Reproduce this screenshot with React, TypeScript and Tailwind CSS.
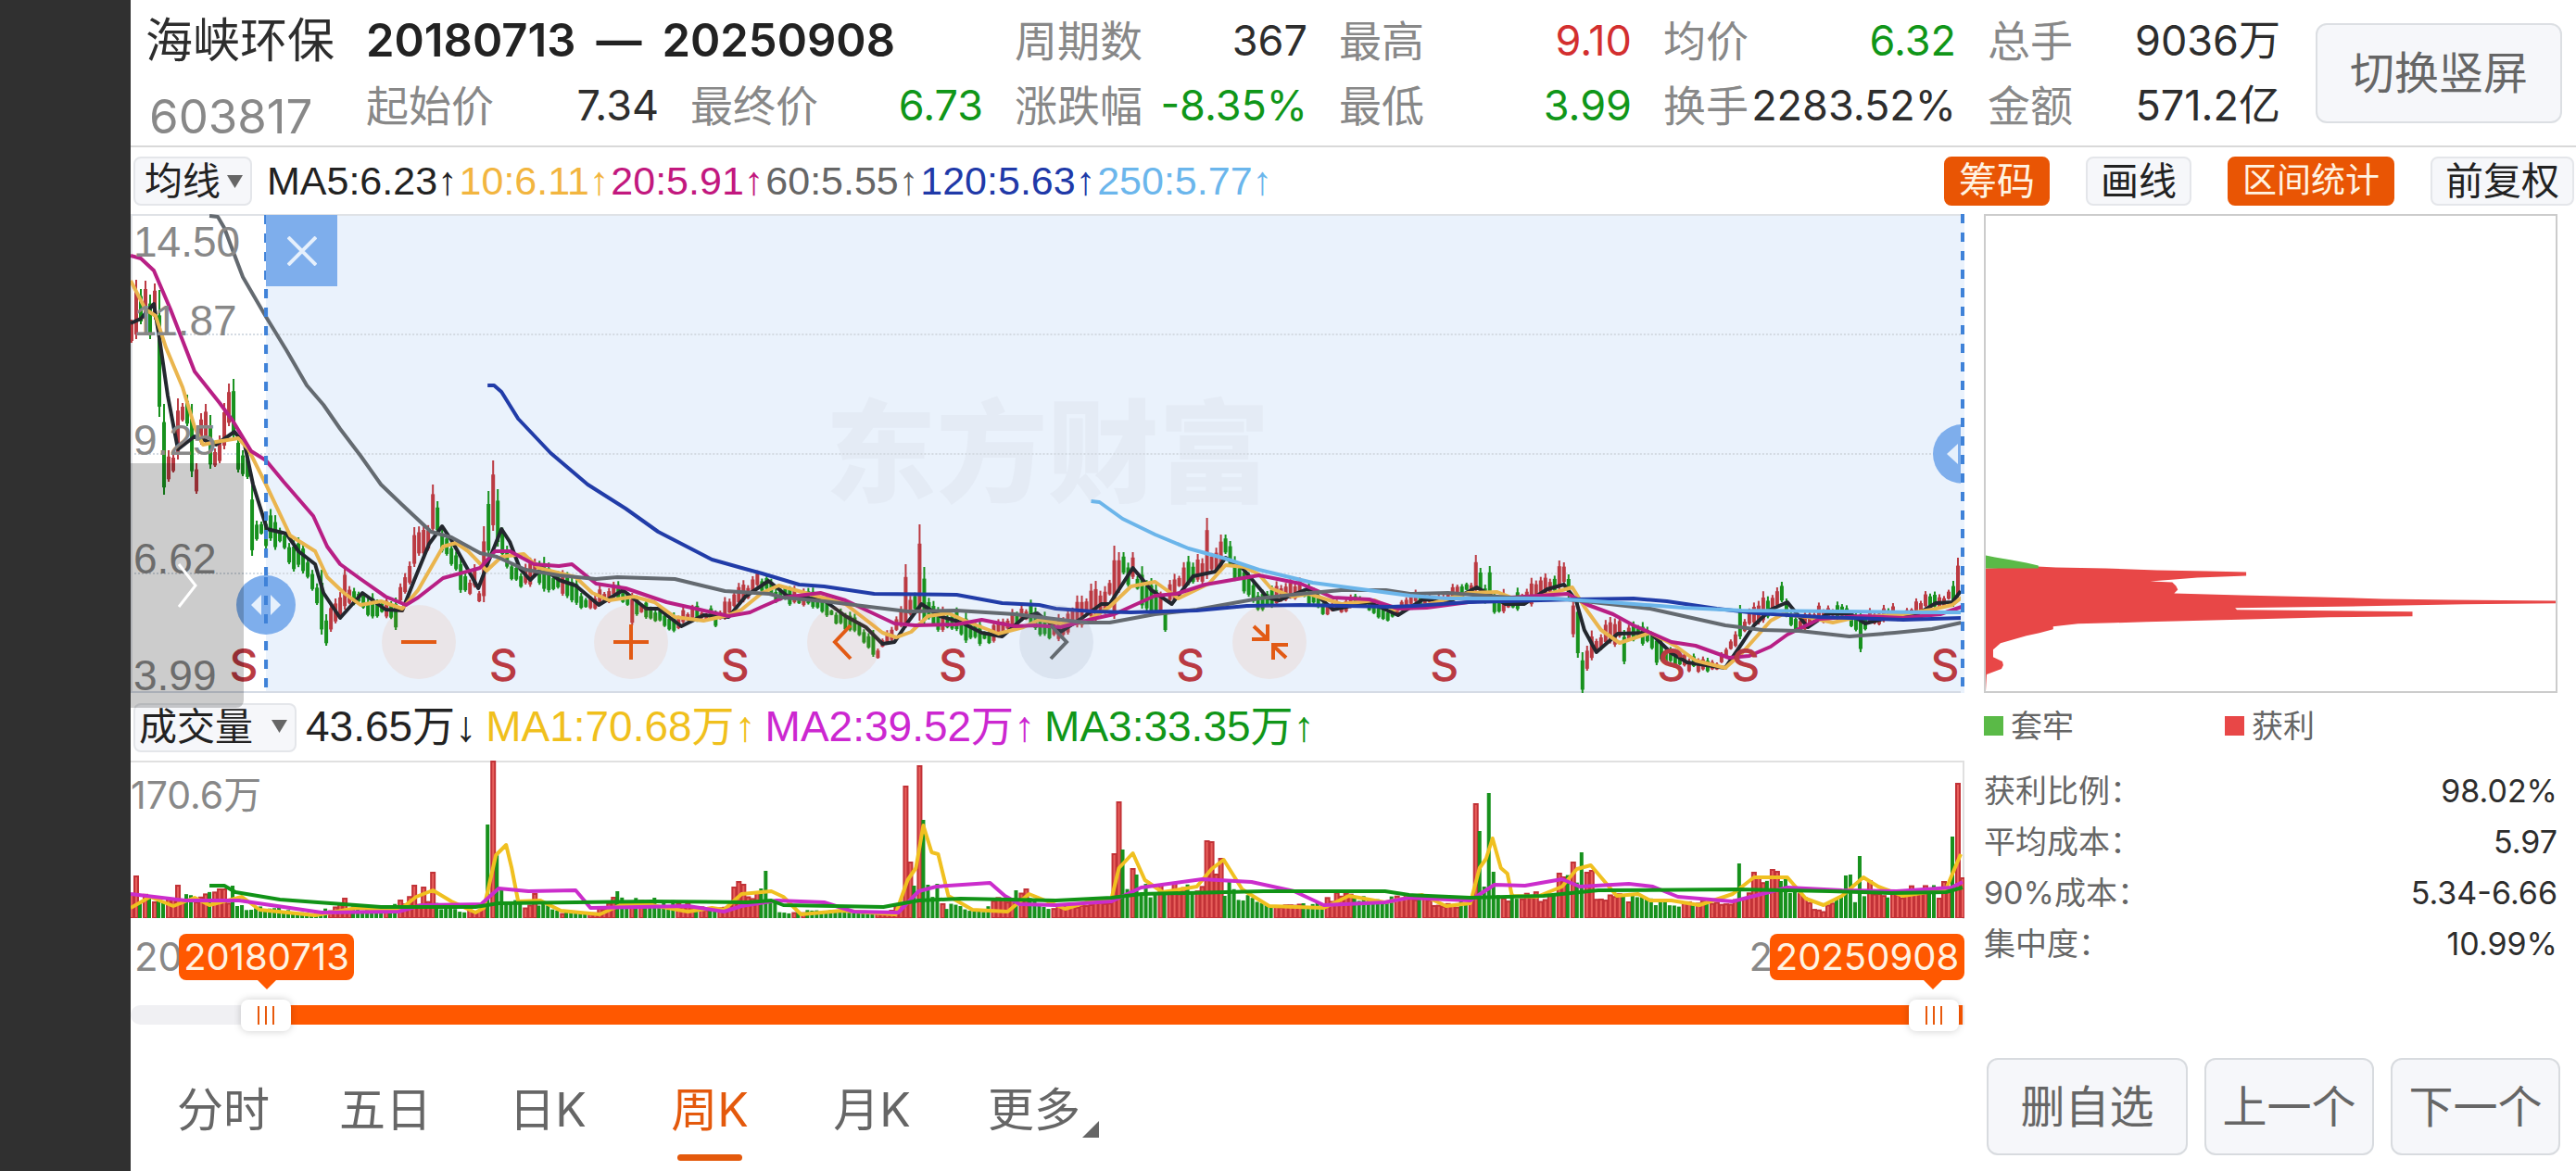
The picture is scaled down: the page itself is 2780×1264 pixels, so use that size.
import { useState } from 'react';
import clsx from 'clsx';

type Point = [number, number];

const STATS = [
  { label: '周期数', value: '367', color: 'text-[#2d2d2d]' },
  { label: '最高', value: '9.10', color: 'text-[#d32f2f]' },
  { label: '均价', value: '6.32', color: 'text-[#109618]' },
  { label: '总手', value: '9036万', color: 'text-[#2d2d2d]' },
  { label: '起始价', value: '7.34', color: 'text-[#2d2d2d]' },
  { label: '最终价', value: '6.73', color: 'text-[#109618]' },
  { label: '涨跌幅', value: '-8.35%', color: 'text-[#109618]' },
  { label: '最低', value: '3.99', color: 'text-[#109618]' },
  { label: '换手', value: '2283.52%', color: 'text-[#2d2d2d]' },
  { label: '金额', value: '571.2亿', color: 'text-[#2d2d2d]' },
];

const PRICE_AVERAGES = [
  { text: 'MA5:6.23↑', color: 'text-[#222]' },
  { text: '10:6.11↑', color: 'text-[#f2b53f]' },
  { text: '20:5.91↑', color: 'text-[#c2187e]' },
  { text: '60:5.55↑', color: 'text-[#666]' },
  { text: '120:5.63↑', color: 'text-[#2039a8]' },
  { text: '250:5.77↑', color: 'text-[#6bb6ec]' },
];

const VOLUME_AVERAGES = [
  { text: '43.65万↓', color: 'text-[#222]' },
  { text: 'MA1:70.68万↑', color: 'text-[#f0c01c]' },
  { text: 'MA2:39.52万↑', color: 'text-[#cc27d0]' },
  { text: 'MA3:33.35万↑', color: 'text-[#109618]' },
];

const TOOLS = [
  { label: '筹码', active: true },
  { label: '画线', active: false },
  { label: '区间统计', active: true },
  { label: '前复权', active: false },
];

const COSTS = [
  { label: '获利比例：', value: '98.02%' },
  { label: '平均成本：', value: '5.97' },
  { label: '90%成本：', value: '5.34-6.66' },
  { label: '集中度：', value: '10.99%' },
];

const TABS = ['分时', '五日', '日K', '周K', '月K'];

// chart coordinates share one canvas: x 141..2119, price y 232..748, volume y 821..992
const MA5: Point[] = [[141,349],[152,344],[166,328],[172,365],[181,427],[192,485],[210,471],[233,480],[253,466],[264,480],[273,523],[288,571],[309,576],[322,595],[340,609],[349,640],[367,667],[391,640],[416,658],[434,659],[447,626],[463,587],[477,568],[487,583],[516,635],[527,606],[541,571],[550,585],[561,614],[572,626],[585,613],[603,626],[621,632],[646,653],[672,637],[697,657],[710,657],[735,676],[759,664],[786,666],[804,644],[829,627],[849,643],[889,648],[912,665],[934,677],[952,695],[965,693],[979,672],[994,652],[1014,665],[1037,672],[1059,683],[1081,687],[1104,667],[1119,662],[1144,682],[1166,668],[1188,652],[1197,652],[1222,613],[1242,637],[1264,652],[1287,622],[1311,617],[1322,602],[1340,613],[1367,645],[1380,648],[1412,635],[1438,658],[1477,650],[1508,664],[1535,647],[1566,648],[1593,634],[1624,652],[1644,652],[1669,636],[1687,631],[1700,648],[1709,680],[1722,704],[1745,684],[1780,683],[1803,705],[1820,715],[1861,721],[1874,702],[1892,675],[1910,658],[1928,650],[1950,677],[1972,662],[1995,662],[2012,673],[2044,665],[2070,662],[2088,651],[2106,650],[2115,638]];
const MA10: Point[] = [[141,303],[157,334],[168,341],[179,375],[197,418],[210,461],[219,480],[233,477],[257,473],[268,485],[287,523],[313,578],[340,595],[353,623],[371,640],[389,653],[411,649],[434,657],[451,637],[478,590],[492,586],[505,595],[525,616],[541,601],[565,598],[581,613],[621,623],[639,640],[657,648],[684,644],[706,650],[728,666],[759,670],[786,664],[800,658],[822,640],[840,632],[858,637],[912,652],[938,672],[952,683],[967,688],[983,682],[1001,665],[1023,662],[1046,672],[1077,684],[1104,677],[1121,669],[1144,673],[1170,672],[1197,655],[1220,633],[1246,628],[1271,646],[1304,630],[1322,610],[1342,612],[1358,620],[1371,635],[1394,644],[1412,641],[1447,652],[1483,648],[1504,658],[1539,653],[1584,640],[1615,639],[1633,646],[1664,643],[1696,634],[1709,655],[1727,680],[1747,694],[1780,683],[1807,697],[1829,713],[1861,721],[1879,705],[1910,670],[1923,663],[1950,666],[1977,672],[1999,667],[2053,663],[2084,658],[2106,653],[2116,645]];
const MA20: Point[] = [[141,276],[152,279],[166,292],[184,334],[210,401],[237,435],[251,454],[271,487],[287,497],[306,520],[338,557],[353,590],[367,609],[389,625],[416,644],[438,653],[451,645],[478,624],[518,613],[534,595],[550,595],[576,609],[603,611],[617,609],[643,630],[675,635],[719,650],[755,658],[786,665],[809,661],[822,655],[845,645],[885,640],[912,648],[965,673],[987,675],[1032,674],[1059,669],[1095,676],[1117,675],[1144,677],[1179,668],[1202,663],[1246,643],[1269,641],[1300,631],[1358,621],[1403,630],[1438,645],[1477,647],[1508,657],[1539,656],[1584,650],[1629,645],[1691,641],[1713,653],[1740,663],[1762,675],[1803,693],[1829,697],[1865,710],[1887,708],[1910,698],[1928,685],[1963,668],[2008,665],[2053,667],[2093,663],[2116,655]];
const MA60: Point[] = [[226,233],[235,234],[242,246],[251,270],[262,299],[287,342],[309,378],[331,416],[349,437],[367,463],[389,492],[411,523],[434,545],[465,574],[487,580],[518,597],[536,601],[567,615],[603,621],[643,625],[666,623],[728,625],[782,638],[830,641],[845,645],[889,649],[979,660],[1032,659],[1095,663],[1170,672],[1197,672],[1246,663],[1291,658],[1358,646],[1403,641],[1447,637],[1495,637],[1521,641],[1562,640],[1629,645],[1691,647],[1736,652],[1780,657],[1816,665],[1861,675],[1901,680],[1941,681],[1995,687],[2044,683],[2084,679],[2116,672]];
const MA120: Point[] = [[526,416],[533,416],[541,423],[559,452],[594,489],[634,523],[675,549],[710,574],[768,604],[800,613],[822,619],[862,631],[889,633],[943,641],[1032,642],[1081,651],[1121,653],[1139,657],[1179,660],[1220,661],[1291,659],[1345,654],[1403,653],[1500,655],[1526,654],[1584,650],[1700,647],[1762,646],[1798,649],[1852,657],[1896,662],[1963,666],[2053,669],[2116,667]];
const MA250: Point[] = [[1177,541],[1186,542],[1211,560],[1246,577],[1282,592],[1322,603],[1358,615],[1416,629],[1461,635],[1521,643],[1562,646],[1673,646],[1736,650],[1816,656],[1879,659],[1986,660],[2075,661],[2116,661]];

const VOL_MA1: Point[] = [[141,980],[162,968],[187,978],[210,969],[226,977],[261,968],[280,982],[340,988],[385,980],[430,983],[449,968],[467,961],[487,973],[513,985],[522,980],[535,923],[546,912],[552,937],[559,973],[583,972],[605,983],[647,987],[669,977],[698,976],[742,984],[768,980],[781,982],[800,965],[832,962],[845,968],[864,987],[908,983],[966,987],[979,950],[988,937],[996,891],[1005,920],[1012,922],[1023,967],[1049,982],[1087,984],[1110,965],[1130,973],[1149,981],[1172,974],[1199,970],[1207,937],[1222,921],[1235,950],[1254,963],[1291,957],[1307,938],[1320,928],[1340,960],[1369,978],[1428,980],[1455,967],[1494,974],[1534,966],[1560,978],[1586,975],[1596,937],[1603,927],[1610,905],[1619,937],[1626,943],[1631,967],[1658,968],[1685,957],[1701,938],[1716,934],[1744,967],[1767,965],[1780,972],[1803,972],[1833,977],[1869,965],[1892,947],[1928,947],[1948,970],[1967,977],[1987,967],[2010,947],[2026,957],[2053,967],[2099,960],[2115,922]];
const VOL_MA2: Point[] = [[141,965],[200,972],[258,972],[347,985],[430,984],[455,977],[519,976],[538,959],[570,962],[621,961],[637,980],[742,978],[781,984],[800,978],[838,972],[889,974],[921,984],[969,985],[991,962],[1010,957],[1068,953],[1084,967],[1100,976],[1139,977],[1199,973],[1231,958],[1297,949],[1350,952],[1396,962],[1428,977],[1494,974],[1520,969],[1586,972],[1612,955],[1645,956],[1685,949],[1704,957],[1757,954],[1783,957],[1810,968],[1869,973],[1928,958],[1987,961],[2046,962],[2105,958],[2117,952]];
const VOL_MA3: Point[] = [[226,956],[242,956],[254,963],[302,971],[411,979],[513,979],[538,975],[704,973],[806,974],[832,972],[845,977],[953,979],[991,972],[1036,970],[1139,972],[1199,969],[1231,965],[1363,962],[1494,962],[1520,966],[1586,969],[1665,967],[1724,961],[1875,960],[1974,962],[2040,964],[2099,963],[2117,958]];

// half height of an ordinary candle, and height of an ordinary volume bar
const SWING: Point[] = [[141,34],[290,22],[420,14],[470,26],[560,22],[640,13],[800,13],[940,12],[1000,18],[1100,14],[1220,26],[1300,20],[1380,16],[1450,9],[1580,12],[1690,18],[1760,16],[1860,8],[1900,20],[1960,12],[2119,12]];
const VOLUME: Point[] = [[141,25],[175,24],[205,22],[240,28],[262,12],[300,10],[340,5],[370,14],[410,7],[440,22],[470,15],[500,6],[520,12],[545,20],[560,16],[590,14],[600,8],[640,6],[670,20],[730,16],[780,10],[800,30],[830,22],[845,5],[880,9],[920,6],[960,6],[975,25],[1000,25],[1020,14],[1060,8],[1085,25],[1110,28],[1130,10],[1150,15],[1190,18],[1225,30],[1290,35],[1310,28],[1340,26],[1360,14],[1420,14],[1445,25],[1480,20],[1520,25],[1560,14],[1590,20],[1625,22],[1660,25],[1690,40],[1720,26],[1780,22],[1800,15],[1870,18],[1900,35],[1930,40],[1950,18],[1962,8],[1990,22],[2020,25],[2060,30],[2117,32]];

// x: [high, low, rising]
const BIG_CANDLES: Record<number, [number, number, boolean]> = {
  142:[345,370,true],147:[302,366,true],152:[312,350,false],157:[303,348,true],162:[318,366,false],167:[306,345,true],
  172:[313,450,false],177:[436,534,false],182:[486,520,true],187:[490,510,true],192:[430,496,true],197:[435,455,true],202:[426,460,false],207:[436,515,false],212:[500,533,true],
  217:[446,480,true],222:[436,478,true],227:[448,506,false],232:[484,504,true],237:[470,500,true],242:[435,485,true],247:[414,460,true],252:[409,475,false],257:[470,510,false],262:[486,514,false],267:[490,517,false],272:[524,600,false],
  347:[615,685,false],352:[663,697,false],357:[650,682,true],372:[611,658,true],427:[645,680,false],447:[569,612,true],457:[565,600,true],467:[523,575,true],472:[541,575,false],
  517:[638,650,true],522:[568,650,true],527:[530,600,false],532:[497,573,true],537:[528,590,false],682:[640,675,true],
  942:[680,709,false],947:[700,711,true],977:[609,678,true],992:[566,670,true],997:[612,675,false],
  1202:[589,668,true],1207:[596,640,true],1212:[596,620,false],1222:[596,625,true],1257:[658,682,false],1282:[600,632,false],
  1302:[559,625,true],1317:[577,615,true],1322:[577,598,false],1327:[584,612,false],
  1592:[599,638,true],1597:[613,638,false],1607:[611,645,false],1682:[605,636,true],1687:[607,630,true],1692:[620,645,false],
  1697:[645,688,true],1702:[648,710,false],1707:[704,748,false],1712:[697,724,true],1752:[680,717,false],1787:[685,718,false],
  1877:[653,690,false],1917:[634,655,true],1922:[628,650,false],2007:[660,704,false],2107:[627,655,false],2112:[602,645,true],2117:[613,628,true],
};
const BIG_VOLUMES: Record<number, number> = {
  147:46,192:36,242:32,252:35,372:22,447:36,457:34,467:50,527:101,532:170,537:70,542:30,577:27,662:23,667:29,707:22,792:34,797:40,802:37,822:32,827:51,
  977:143,982:61,987:35,992:165,997:106,1002:36,1012:37,1097:30,1107:32,1202:70,1207:126,1212:74,1222:54,1227:47,1302:84,1307:83,1312:48,1317:65,1327:42,
  1592:124,1597:94,1602:34,1607:135,1612:50,1682:49,1687:45,1697:61,1707:71,1712:50,1717:52,1877:59,1892:50,1897:45,1912:53,1917:51,1922:40,1992:46,1997:47,2007:67,2017:41,2097:40,2107:88,2112:146,2117:44,
};

const CHIP_PROFIT = '0,382 56,380 76,381 130,382 185,384 239,385 282,386 282,390 256,391 229,392 204,394 178,396 202,397 206,401 208,405 204,409 276,411 362,413 430,415 503,416 617,417 617,420 518,421 410,423 270,425 272,427 379,428 462,429 462,434 372,435 295,437 215,439 174,440 139,441 100,442 73,445 73,448 58,452 44,455 16,463 8,470 8,478 18,483 19,487 17,491 1,497 0,515';
const CHIP_TRAPPED = '0,368 10,370 28,373 44,376 57,379 57,382 0,382';

const SELL_MARKS = [263, 543, 793, 1028, 1284, 1558, 1803, 1883, 2098];

function valueAt(line: Point[], x: number) {
  const i = line.findIndex((p) => p[0] >= x);
  if (i < 0) return line[line.length - 1][1];
  if (i === 0) return line[0][1];
  const [x0, y0] = line[i - 1];
  const [x1, y1] = line[i];
  return y0 + ((y1 - y0) * (x - x0)) / (x1 - x0);
}

function noise(n: number) {
  const v = Math.sin(n * 12.9898) * 43758.5453;
  return v - Math.floor(v);
}

const CANDLES = Array.from({ length: 396 }, (_, i) => {
  const x = 142 + i * 5;
  const big = BIG_CANDLES[x];
  if (big) return { x, high: big[0], low: big[1], up: big[2] };
  const mid = valueAt(MA5, x + 10);
  const swing = valueAt(SWING, x);
  const slope = valueAt(MA5, x + 14) - valueAt(MA5, x + 4);
  return {
    x,
    high: mid - swing * (0.25 + noise(i) * 0.9),
    low: mid + swing * (0.2 + noise(i + 500) * 0.7),
    up: slope + (noise(i + 900) - 0.5) * 12 < 0,
  };
});

const BARS = CANDLES.map(({ x, up }, i) => ({
  x,
  up,
  height: BIG_VOLUMES[x] ?? Math.max(3, valueAt(VOLUME, x) * (0.7 + noise(i + 77) * 0.5)),
}));

function Line({ points, color }: { points: Point[]; color: string }) {
  return <polyline points={points.join(' ')} fill="none" stroke={color} strokeWidth="4" strokeLinejoin="round" />;
}

function Picker({ label, options, wide }: { label: string; options: string[]; wide?: boolean }) {
  return (
    <div className="relative shrink-0">
      <select
        aria-label={label}
        className={clsx(
          'h-[53px] appearance-none rounded-lg border-2 border-[#e4e6ea] bg-[#f6f7fa] text-[41px] leading-[48px] text-[#222]',
          wide ? 'w-[176px] pl-1' : 'w-[128px] pl-2.5'
        )}
      >
        {options.map((o) => (
          <option key={o}>{o}</option>
        ))}
      </select>
      <svg className="pointer-events-none absolute right-2.5 top-5 h-3.5 w-[17px]" viewBox="0 0 17 14">
        <path d="M0 0H17L8.500 14Z" fill="#666" />
      </svg>
    </div>
  );
}

function Header() {
  const cell = (s: (typeof STATS)[number]) => (
    <div key={s.label} className="flex items-center justify-between whitespace-nowrap">
      <span className="text-[46px] text-[#888]">{s.label}</span>
      <span className={s.color}>{s.value}</span>
    </div>
  );
  return (
    <header className="flex h-[159px] items-start border-b-2 border-[#d9d9d9]">
      <div className="w-[254px] shrink-0 pl-4 pt-2">
        <h1 className="text-[51px] leading-[72px] text-[#2d2d2d]">海峡环保</h1>
        <p className="pl-1 pt-2 text-[51px] leading-[76px] text-[#888]">603817</p>
      </div>
      <div className="grid flex-1 grid-cols-6 gap-x-[34px] pt-[9px] text-[45px] leading-[70px]">
        <div className="col-span-2 flex gap-[22px] whitespace-nowrap text-[49px] font-semibold text-[#222]">
          <span>20180713</span>
          <span>—</span>
          <span>20250908</span>
        </div>
        {STATS.map(cell)}
      </div>
      <button className="ml-[38px] mr-[15px] mt-[25px] h-[108px] w-[266px] shrink-0 rounded-xl border-2 border-[#dcdfe3] bg-[#f6f7fa] text-[48px] text-[#666]">
        切换竖屏
      </button>
    </header>
  );
}

function Toolbar() {
  return (
    <div className="flex h-[72px] items-center pl-[3px] pr-0.5">
      <Picker label="指标" options={['均线']} />
      <div className="flex flex-1 gap-0.5 whitespace-nowrap pl-4 font-['Liberation_Sans','Noto_Sans_CJK_SC',sans-serif] text-[43px] leading-[53px]">
        {PRICE_AVERAGES.map((a) => (
          <span key={a.text} className={a.color}>{a.text}</span>
        ))}
      </div>
      <div className="flex gap-[39px]">
        {TOOLS.map((t) => (
          <button
            key={t.label}
            className={clsx(
              'h-[53px] rounded-lg border-2 px-3.5 leading-[48px] whitespace-nowrap',
              t.label.length > 3 ? 'text-[37px]' : 'text-[41px]',
              t.active ? 'border-[#e95504] bg-[#e95504] text-[#fff3e2]' : 'border-[#e4e6ea] bg-[#f6f7fa] text-[#222]'
            )}
          >
            {t.label}
          </button>
        ))}
      </div>
    </div>
  );
}

const ROUND = 'absolute top-[422px] flex size-20 -translate-x-1/2 items-center justify-center rounded-full';

function PriceChart() {
  return (
    <div className="relative h-[517px] overflow-hidden">
      <div className="absolute inset-y-0 left-[146px] right-0 bg-[#eaf2fc]" />
      <div className="absolute inset-0 flex items-center justify-center text-[120px] font-black text-[#e4ebf5]">东方财富</div>
      <svg className="absolute inset-0 size-full" viewBox="141 231 1978 517" preserveAspectRatio="none">
        {[361, 490, 619].map((y) => (
          <line key={y} x1="141" x2="2119" y1={y} y2={y} stroke="#d3dae2" strokeWidth="2" strokeDasharray="2 2" />
        ))}
        <path d="M142 748V232H2118V748" fill="none" stroke="#dfe2e6" strokeWidth="2" />
        <line x1="141" x2="2119" y1="747" y2="747" stroke="#d5dbe5" strokeWidth="2" />
        {CANDLES.map((c) => {
          const color = c.up ? '#bb3a42' : '#17911d';
          const inset = (c.low - c.high) * 0.2;
          return (
            <g key={c.x} fill={color}>
              <rect x={c.x - 1} y={c.high} width="2" height={c.low - c.high} />
              <rect x={c.x - 2} y={c.high + inset} width="4" height={c.low - c.high - inset * 1.4} />
            </g>
          );
        })}
        <Line points={MA5} color="#23272e" />
        <Line points={MA10} color="#eab54e" />
        <Line points={MA20} color="#b81f85" />
        <Line points={MA60} color="#646a70" />
        <Line points={MA120} color="#213ca8" />
        <Line points={MA250} color="#6bb5ea" />
        <line x1="287" x2="287" y1="232" y2="748" stroke="#3f82d8" strokeWidth="4" strokeDasharray="10 10" />
      </svg>

      <div className="absolute left-[3px] top-0 font-['Liberation_Sans',sans-serif] text-[46px] leading-[36px] text-[#888]">
        <span className="absolute top-[12px]">14.50</span>
        <span className="absolute top-[97px]">11.87</span>
        <span className="absolute top-[226px]">9.25</span>
        <span className="absolute top-[354px]">6.62</span>
        <span className="absolute top-[480px]">3.99</span>
      </div>

      {SELL_MARKS.map((x) => (
        <span
          key={x}
          className="absolute top-[458px] -translate-x-1/2 text-[48px] font-medium leading-[58px] text-[#b93a42]"
          style={{ left: `${((x - 141) / 1978) * 100}%` }}
        >
          S
        </span>
      ))}

      <button aria-label="缩小" className={clsx(ROUND, 'left-[15.700%] bg-[#f0783c]/10')}>
        <svg className="size-10" viewBox="0 0 40 40" fill="none" stroke="#e25a14" strokeWidth="4"><path d="M1 20H39" /></svg>
      </button>
      <button aria-label="放大" className={clsx(ROUND, 'left-[27.300%] bg-[#f0783c]/10')}>
        <svg className="size-10" viewBox="0 0 40 40" fill="none" stroke="#e25a14" strokeWidth="4"><path d="M1 20H39M20 1V39" /></svg>
      </button>
      <button aria-label="左移" className={clsx(ROUND, 'left-[38.900%] bg-[#f0783c]/10')}>
        <svg className="size-10" viewBox="0 0 40 40" fill="none" stroke="#e25a14" strokeWidth="4"><path d="M27 2L10 20L27 38" /></svg>
      </button>
      <button aria-label="右移" className={clsx(ROUND, 'left-[50.500%] bg-[#8696ac]/15')}>
        <svg className="size-10" viewBox="0 0 40 40" fill="none" stroke="#646a70" strokeWidth="4"><path d="M14 2L31 20L14 38" /></svg>
      </button>
      <button aria-label="还原" className={clsx(ROUND, 'left-[62.100%] bg-[#f0783c]/10')}>
        <svg className="size-10" viewBox="0 0 40 40" fill="none" stroke="#e25a14" strokeWidth="4">
          <path d="M3 3L18 17M18 1V17H1M38 37L24 24M24 39V23H40" />
        </svg>
      </button>

      <button aria-label="关闭" className="absolute left-[146px] top-px flex size-[77px] items-center justify-center bg-[#7eaeec]">
        <svg className="size-8" viewBox="0 0 32 32" fill="none" stroke="#e6f0fc" strokeWidth="4"><path d="M1 1L31 31M31 1L1 31" /></svg>
      </button>
      <svg className="absolute left-[114px] top-[390px] size-16" viewBox="0 0 64 64">
        <circle cx="32" cy="32" r="32" fill="#7eaeec" />
        <path d="M27 21V43L16 32ZM37 21V43L48 32Z" fill="#e6f0fc" />
        <path d="M32 2V12M32 22V32M32 42V52" stroke="#3f82d8" strokeWidth="4" />
      </svg>
      <svg className="absolute -right-[30px] top-[227px] size-16" viewBox="0 0 64 64">
        <circle cx="32" cy="32" r="32" fill="#7eaeec" />
        <path d="M27 21V43L15 32Z" fill="#e6f0fc" />
      </svg>
      <div className="absolute inset-y-0 right-0 w-1 bg-[repeating-linear-gradient(180deg,#3f82d8_0_10px,#eaf2fc_10px_20px)]" />
    </div>
  );
}

function VolumeChart() {
  return (
    <div className="relative h-[171px]">
      <svg className="absolute inset-0 size-full" viewBox="141 821 1978 171" preserveAspectRatio="none">
        <path d="M141 822H2118V992" fill="none" stroke="#e0e0e0" strokeWidth="2" />
        {BARS.map((b) => (
          <g key={b.x}>
            <rect x={b.x - 3} y={991 - b.height} width={b.up ? 6 : 4} height={b.height} fill={b.up ? '#c23237' : '#17911d'} />
            {b.up && <rect x={b.x - 1} y={993 - b.height} width="2" height={b.height - 3} fill="#e8605c" />}
          </g>
        ))}
        <Line points={VOL_MA1} color="#f0c020" />
        <Line points={VOL_MA2} color="#cb2dcc" />
        <Line points={VOL_MA3} color="#119317" />
      </svg>
      <span className="absolute left-0 top-[11px] text-[41px] leading-[52px] text-[#888]">170.6万</span>
    </div>
  );
}

const RANGE_INPUT =
  'pointer-events-none absolute inset-0 h-[34px] w-full appearance-none bg-transparent [&::-webkit-slider-thumb]:pointer-events-auto [&::-webkit-slider-thumb]:h-[34px] [&::-webkit-slider-thumb]:w-[54px] [&::-webkit-slider-thumb]:appearance-none [&::-webkit-slider-thumb]:rounded-lg [&::-webkit-slider-thumb]:bg-white [&::-webkit-slider-thumb]:bg-[image:repeating-linear-gradient(90deg,#e8590c_0_2px,transparent_2px_8px)] [&::-webkit-slider-thumb]:bg-[length:18px_20px] [&::-webkit-slider-thumb]:bg-center [&::-webkit-slider-thumb]:bg-no-repeat [&::-webkit-slider-thumb]:shadow-[0_0_8px_rgba(0,0,0,0.2)]';

function RangeSlider() {
  const [start, setStart] = useState(62);
  const [end, setEnd] = useState(997);
  return (
    <div className="pt-4">
      <div className="relative h-[50px] text-[42px] leading-[50px] text-[#888]">
        <span className="pl-1">20</span>
        <span className="absolute right-[207px]">2</span>
        <div className="absolute left-[52px] top-0 w-[189px] rounded-lg bg-[#ff5800] text-center text-[40px] text-[#fff3e2]">
          20180713
          <span className="absolute left-1/2 top-full -translate-x-1/2 border-x-10 border-t-10 border-x-transparent border-t-[#ff5800]" />
        </div>
        <div className="absolute right-0 top-0 w-[210px] rounded-lg bg-[#ff5800] text-center text-[40px] text-[#fff3e2]">
          20250908
          <span className="absolute right-6 top-full border-x-10 border-t-10 border-x-transparent border-t-[#ff5800]" />
        </div>
      </div>
      <div className="relative mt-[21px] h-[34px]">
        <div className="absolute inset-x-0 top-[6px] h-[21px] rounded-l-xl bg-[#f0f0f3]" />
        <div className="absolute left-[146px] right-0.5 top-[6px] h-[21px] bg-[#ff5800]" />
        <input type="range" aria-label="开始日期" min={0} max={1000} value={start} onChange={(e) => setStart(+e.target.value)} className={RANGE_INPUT} />
        <input type="range" aria-label="结束日期" min={0} max={1000} value={end} onChange={(e) => setEnd(+e.target.value)} className={RANGE_INPUT} />
      </div>
    </div>
  );
}

function ChipPanel() {
  return (
    <aside className="w-[660px] shrink-0 pl-[21px] pr-5">
      <div className="h-[517px] border-2 border-[#ccc]">
        <svg className="size-full" viewBox="0 0 617 515" preserveAspectRatio="none">
          <polygon points={CHIP_PROFIT} fill="#e84747" />
          <polygon points={CHIP_TRAPPED} fill="#5aba47" />
        </svg>
      </div>
      <div className="flex h-[70px] items-center text-[34px] text-[#666]">
        <div className="flex w-[260px] items-center gap-2"><i className="size-[21px] bg-[#5aba47]" />套牢</div>
        <div className="flex items-center gap-2"><i className="size-[21px] bg-[#e84747]" />获利</div>
      </div>
      <dl className="pt-2 text-[34px] leading-[55px]">
        {COSTS.map((c) => (
          <div key={c.label} className="flex justify-between">
            <dt className="text-[#666]">{c.label}</dt>
            <dd className="text-[#2d2d2d]">{c.value}</dd>
          </div>
        ))}
      </dl>
    </aside>
  );
}

function Footer() {
  const [tab, setTab] = useState('周K');
  return (
    <footer className="flex items-start justify-between pl-[50px] pr-[17px] pt-[29px]">
      <nav className="flex gap-[75px] text-[50px] leading-[72px] text-[#666]">
        {TABS.map((t) => (
          <button
            key={t}
            onClick={() => setTab(t)}
            className={clsx('relative h-[111px] w-[100px] whitespace-nowrap', t === tab && 'text-[#e4590c]')}
          >
            {t}
            {t === tab && <span className="absolute bottom-0 left-1/2 h-[7px] w-[70px] -translate-x-1/2 rounded-full bg-[#e4590c]" />}
          </button>
        ))}
        <button className="relative h-[111px] w-[100px] whitespace-nowrap">
          更多
          <svg className="absolute -right-5 top-[68px] size-[18px]" viewBox="0 0 18 18"><path d="M18 0V18H0Z" fill="#666" /></svg>
        </button>
      </nav>
      <div className="flex gap-[18px] text-[48px] text-[#666]">
        <button className="h-[105px] w-[217px] rounded-xl border-2 border-[#d8dbdf] bg-[#f6f7fa]">删自选</button>
        <button className="h-[105px] w-[183px] rounded-xl border-2 border-[#d8dbdf] bg-[#f6f7fa]">上一个</button>
        <button className="h-[105px] w-[183px] rounded-xl border-2 border-[#d8dbdf] bg-[#f6f7fa]">下一个</button>
      </div>
    </footer>
  );
}

export default function App() {
  return (
    <div className="flex min-h-screen bg-white font-[Inter,'Noto_Sans_CJK_SC',sans-serif]">
      <div className="w-[141px] shrink-0 bg-[#303030]" />
      <main className="min-w-0 flex-1">
        <Header />
        <Toolbar />
        <div className="flex">
          <section className="relative min-w-0 flex-1">
            <PriceChart />
            <div className="flex h-[73px] items-center gap-2.5 whitespace-nowrap pl-[3px] font-['Liberation_Sans','Noto_Sans_CJK_SC',sans-serif] text-[46px] leading-[53px]">
              <Picker label="副图指标" options={['成交量']} wide />
              {VOLUME_AVERAGES.map((a) => (
                <span key={a.text} className={a.color}>{a.text}</span>
              ))}
            </div>
            <VolumeChart />
            <RangeSlider />
            <button aria-label="展开" className="absolute left-0 top-[269px] flex h-[264px] w-[122px] items-center justify-center rounded-br-lg bg-black/20">
              <svg className="h-12 w-6" viewBox="0 0 24 48" fill="none" stroke="#fff" strokeWidth="3"><path d="M3 1L21 24L3 47" /></svg>
            </button>
          </section>
          <ChipPanel />
        </div>
        <Footer />
      </main>
    </div>
  );
}
